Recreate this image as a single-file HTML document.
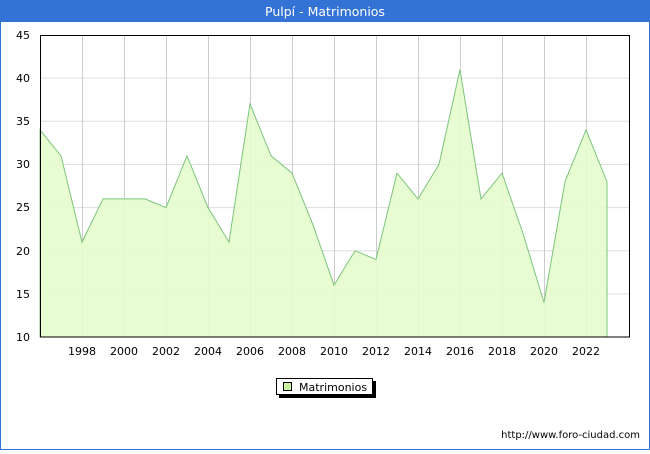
<!DOCTYPE html>
<html><head><style>
body{margin:0;width:650px;height:450px;overflow:hidden;background:#fff;font-family:"DejaVu Sans","Liberation Sans",sans-serif;}
</style></head><body>
<svg width="650" height="450" xmlns="http://www.w3.org/2000/svg" font-family="DejaVu Sans, Liberation Sans, sans-serif">
<rect x="0" y="0" width="650" height="450" fill="#fff"/>
<rect x="0" y="0" width="650" height="22" fill="#3373d6"/>
<rect x="0.5" y="0" width="649" height="449.5" fill="none" stroke="#3373d6" stroke-width="1"/>
<text x="325" y="16" fill="#fff" font-size="12.5" text-anchor="middle">Pulpí - Matrimonios</text>
<g stroke="#dddddd" stroke-width="1">
<line x1="40" y1="78.1" x2="630" y2="78.1"/><line x1="40" y1="121.3" x2="630" y2="121.3"/>
<line x1="40" y1="164.4" x2="630" y2="164.4"/><line x1="40" y1="207.6" x2="630" y2="207.6"/>
<line x1="40" y1="250.7" x2="630" y2="250.7"/><line x1="40" y1="293.9" x2="630" y2="293.9"/>
</g>
<g stroke="#cccccc" stroke-width="1">
<line x1="82.5" y1="35" x2="82.5" y2="337"/><line x1="124.5" y1="35" x2="124.5" y2="337"/>
<line x1="166.5" y1="35" x2="166.5" y2="337"/><line x1="208.5" y1="35" x2="208.5" y2="337"/>
<line x1="250.5" y1="35" x2="250.5" y2="337"/><line x1="292.5" y1="35" x2="292.5" y2="337"/>
<line x1="334.5" y1="35" x2="334.5" y2="337"/><line x1="376.5" y1="35" x2="376.5" y2="337"/>
<line x1="418.5" y1="35" x2="418.5" y2="337"/><line x1="460.5" y1="35" x2="460.5" y2="337"/>
<line x1="502.5" y1="35" x2="502.5" y2="337"/><line x1="544.5" y1="35" x2="544.5" y2="337"/>
<line x1="586.5" y1="35" x2="586.5" y2="337"/>
</g>
<polygon fill="#e4fccc" fill-opacity="0.9" stroke="#7cc47c" stroke-width="1" points="40,337 40,129.9 61,155.8 82,242.1 103,198.9 124,198.9 145,198.9 166,207.6 187,155.8 208,207.6 229,242.1 250,103.9 271,155.8 292,173.1 313,224.8 334,285.2 355,250.7 376,259.4 397,173.1 418,198.9 439,164.4 460,69.5 481,198.9 502,173.1 523,233.5 544,302.5 565,181.7 586,129.9 607,181.7 607,337"/>
<rect x="40.5" y="35.5" width="589" height="301.5" fill="none" stroke="#000" stroke-width="1"/>
<g font-size="11" fill="#000" text-anchor="end">
<text x="30" y="39">45</text><text x="30" y="82">40</text><text x="30" y="125">35</text>
<text x="30" y="168">30</text><text x="30" y="211">25</text><text x="30" y="255">20</text>
<text x="30" y="298">15</text><text x="30" y="341">10</text>
</g>
<g font-size="11" fill="#000" text-anchor="middle">
<text x="82" y="355">1998</text><text x="124" y="355">2000</text><text x="166" y="355">2002</text>
<text x="208" y="355">2004</text><text x="250" y="355">2006</text><text x="292" y="355">2008</text>
<text x="334" y="355">2010</text><text x="376" y="355">2012</text><text x="418" y="355">2014</text>
<text x="460" y="355">2016</text><text x="502" y="355">2018</text><text x="544" y="355">2020</text>
<text x="586" y="355">2022</text>
</g>
<rect x="279" y="381" width="97" height="17" fill="#000"/>
<rect x="276.5" y="378.5" width="96" height="16" fill="#fff" stroke="#000" stroke-width="1"/>
<rect x="283.5" y="382.5" width="8" height="8" fill="#ccf5a0" stroke="#000" stroke-width="1"/>
<text x="299" y="391" font-size="11" fill="#000">Matrimonios</text>
<text x="640" y="438" font-size="10" fill="#000" text-anchor="end">http://www.foro-ciudad.com</text>
</svg>
</body></html>
